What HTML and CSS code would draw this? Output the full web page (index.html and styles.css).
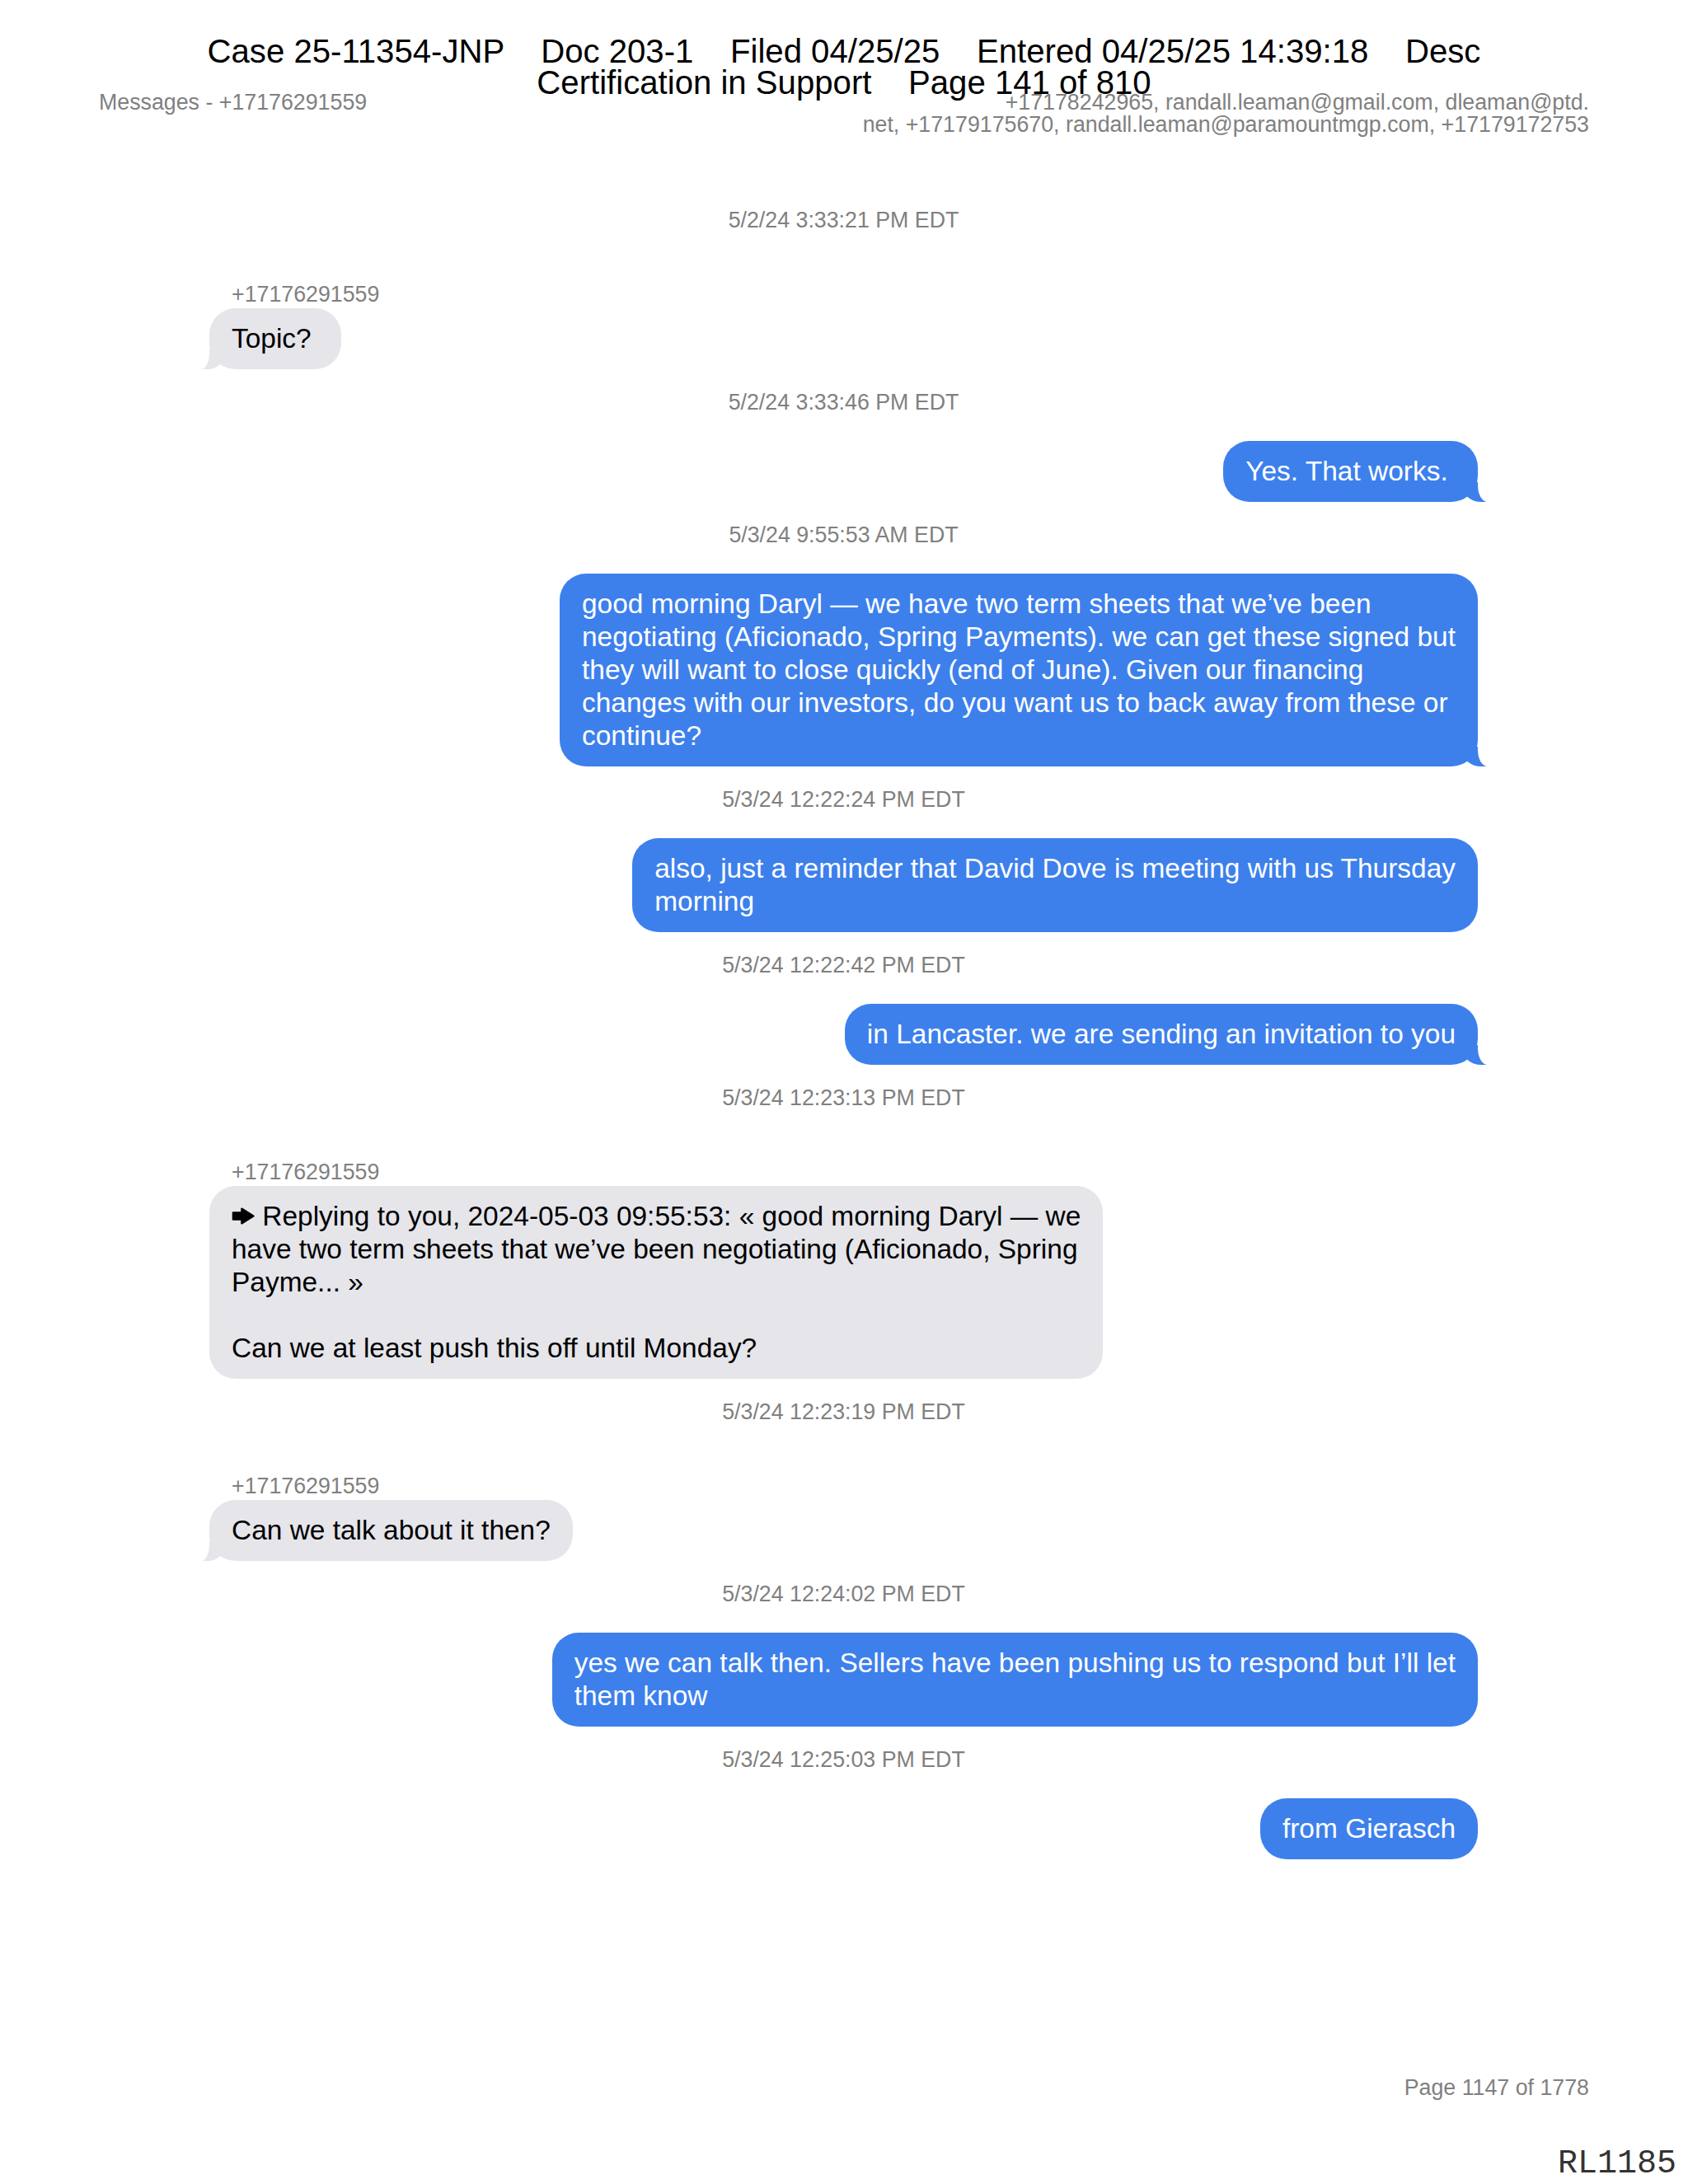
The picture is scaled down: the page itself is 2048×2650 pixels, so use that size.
FILE: index.html
```html
<!DOCTYPE html>
<html lang="en">
<head>
<meta charset="utf-8">
<title>Messages - +17176291559</title>
<link rel="stylesheet" href="styles.css">
</head>
<body>
<div class="page">
<div class="stamp">Case 25-11354-JNP    Doc 203-1    Filed 04/25/25    Entered 04/25/25 14:39:18    Desc
Certification in Support    Page 141 of 810</div>
  <header class="doc-header">
    <div class="doc-title">Messages - +17176291559</div>
    <div class="doc-participants">+17178242965, randall.leaman@gmail.com, dleaman@ptd.<br>net, +17179175670, randall.leaman@paramountmgp.com, +17179172753</div>
  </header>
  <main class="chat">
    <div class="ts">5/2/24 3:33:21 PM EDT</div>
    <div class="sender">+17176291559</div>
    <div class="bubble in tail">Topic?&nbsp;</div>

    <div class="ts">5/2/24 3:33:46 PM EDT</div>
    <div class="bubble out tail">Yes. That works.&nbsp;</div>

    <div class="ts">5/3/24 9:55:53 AM EDT</div>
    <div class="bubble out tail">good morning Daryl — we have two term sheets that we’ve been<br>negotiating (Aficionado, Spring Payments). we can get these signed but<br>they will want to close quickly (end of June). Given our financing<br>changes with our investors, do you want us to back away from these or<br>continue?</div>

    <div class="ts">5/3/24 12:22:24 PM EDT</div>
    <div class="bubble out">also, just a reminder that David Dove is meeting with us Thursday<br>morning</div>

    <div class="ts">5/3/24 12:22:42 PM EDT</div>
    <div class="bubble out tail">in Lancaster. we are sending an invitation to you</div>

    <div class="ts">5/3/24 12:23:13 PM EDT</div>
    <div class="sender">+17176291559</div>
    <div class="bubble in"><svg class="reply-arrow" viewBox="0 0 28 21" aria-hidden="true"><path d="M2 6.5 H12.5 V1.8 L26.3 10.5 L12.5 19.2 V14.5 H2 Z" fill="#000" stroke="#000" stroke-width="2.6" stroke-linejoin="round"/></svg> Replying to you, 2024-05-03 09:55:53: « good morning Daryl — we<br>have two term sheets that we’ve been negotiating (Aficionado, Spring<br>Payme... »<br><br>Can we at least push this off until Monday?</div>

    <div class="ts">5/3/24 12:23:19 PM EDT</div>
    <div class="sender">+17176291559</div>
    <div class="bubble in tail">Can we talk about it then?</div>

    <div class="ts">5/3/24 12:24:02 PM EDT</div>
    <div class="bubble out">yes we can talk then. Sellers have been pushing us to respond but I’ll let<br>them know</div>

    <div class="ts">5/3/24 12:25:03 PM EDT</div>
    <div class="bubble out">from Gierasch</div>
  </main>
  <footer class="page-footer">Page 1147 of 1778</footer>
  <div class="bates">RL1185</div>
</div>
</body>
</html>
```

FILE: styles.css
```css
* {
  box-sizing: border-box;
}

html,
body {
  margin: 0;
  padding: 0;
  background: #ffffff;
}

body {
  font-family: "Liberation Sans", Arial, Helvetica, sans-serif;
  color: #000000;
}

.page {
  position: relative;
  width: 2048px;
  min-height: 2650px;
  display: flex;
  flex-direction: column;
}

/* court filing stamp, printed over the page */
.stamp {
  position: absolute;
  top: 44px;
  left: 0;
  right: 0;
  z-index: 2;
  text-align: center;
  white-space: pre;
  font-size: 40.15px;
  line-height: 38px;
  color: #000000;
}

.doc-header {
  display: flex;
  justify-content: space-between;
  align-items: flex-start;
  padding: 111px 120px 0;
  font-size: 26.77px;
  line-height: 27px;
  color: #808080;
}

.doc-participants {
  text-align: right;
}

.chat {
  display: flex;
  flex-direction: column;
  margin-top: 87px;
  padding: 0 255px 0 254px;
}

.ts {
  font-size: 26.77px;
  line-height: 30px;
  color: #808080;
  text-align: center;
  margin-bottom: 32px;
}

.bubble + .ts {
  margin-top: 25px;
}

.sender {
  margin-top: 28px;
  margin-bottom: 2px;
  padding-left: 27px;
  font-size: 26.77px;
  line-height: 30px;
  color: #808080;
}

.bubble {
  position: relative;
  z-index: 0;
  padding: 17px 27px;
  border-radius: 32px;
  font-size: 33.46px;
  line-height: 40px;
  white-space: nowrap;
}

.bubble.in {
  align-self: flex-start;
  background: #e5e5ea;
  color: #000000;
}

.bubble.out {
  align-self: flex-end;
  background: #3d80ec;
  color: #ffffff;
}

.reply-arrow {
  display: inline-block;
  width: 28px;
  height: 21px;
  vertical-align: 1px;
}

/* bubble tails */
.bubble.tail::before,
.bubble.tail::after {
  content: "";
  position: absolute;
  bottom: 0;
  z-index: -1;
}

.bubble.out.tail::before {
  right: -12px;
  width: 30px;
  height: 24px;
  background: #3d80ec;
  border-bottom-left-radius: 22px 18px;
}

.bubble.out.tail::after {
  right: -40px;
  width: 40px;
  height: 26px;
  background: #ffffff;
  border-bottom-left-radius: 12px 20px;
}

.bubble.in.tail::before {
  left: -10px;
  width: 28px;
  height: 24px;
  background: #e5e5ea;
  border-bottom-right-radius: 20px 18px;
}

.bubble.in.tail::after {
  left: -40px;
  width: 40px;
  height: 26px;
  background: #ffffff;
  border-bottom-right-radius: 10px 20px;
}

.page-footer {
  margin-top: auto;
  padding-right: 120px;
  text-align: right;
  font-size: 26.77px;
  line-height: 27px;
  color: #808080;
}

.bates {
  margin-top: 56px;
  margin-bottom: 1px;
  padding-right: 14px;
  text-align: right;
  font-family: "Liberation Mono", "Courier New", monospace;
  font-size: 40px;
  line-height: 46px;
  color: #333333;
}
```
